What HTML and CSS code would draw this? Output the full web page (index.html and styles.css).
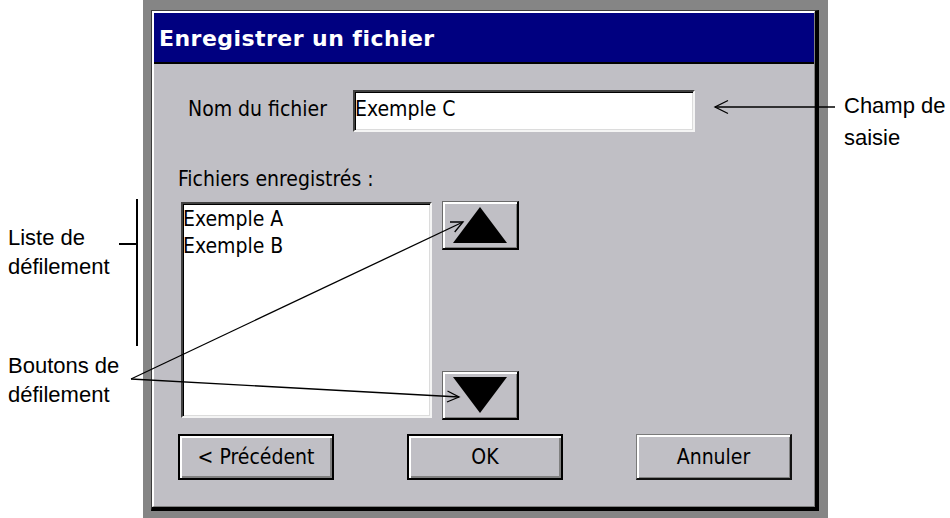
FILE: index.html
```html
<!DOCTYPE html>
<html lang="fr">
<head>
<meta charset="utf-8">
<title>Enregistrer un fichier</title>
<link rel="stylesheet" href="styles.css">
</head>
<body>
<div class="page">
  <aside class="notes-left">
    <p class="note note-list">Liste de<br>défilement</p>
    <p class="note note-scroll">Boutons de<br>défilement</p>
  </aside>
  <div class="frame">
    <div class="dialog">
      <div class="dialog-inner">
        <div class="titlebar">Enregistrer un fichier</div>
        <div class="dialog-body">
          <div class="name-row">
            <span class="name-label">Nom du fichier</span>
            <div class="field">Exemple C</div>
          </div>
          <div class="files-label">Fichiers enregistrés :</div>
          <div class="files-row">
            <ul class="listbox">
              <li>Exemple A</li>
              <li>Exemple B</li>
            </ul>
            <div class="scroll-col">
              <button class="scroll-btn" type="button" aria-label="Haut">
                <svg class="tri" width="54" height="36" viewBox="0 0 54 36"><polygon points="27,0 54,36 0,36"/></svg>
              </button>
              <button class="scroll-btn" type="button" aria-label="Bas">
                <svg class="tri" width="54" height="36" viewBox="0 0 54 36"><polygon points="0,0 54,0 27,36"/></svg>
              </button>
            </div>
          </div>
          <div class="actions">
            <button class="btn btn-default" type="button">&lt; Précédent</button>
            <button class="btn btn-default" type="button">OK</button>
            <button class="btn btn-plain" type="button">Annuler</button>
          </div>
        </div>
      </div>
    </div>
  </div>
  <aside class="notes-right">
    <p class="note note-field">Champ de<br>saisie</p>
  </aside>
</div>
<svg class="leaders" width="950" height="518" viewBox="0 0 950 518">
  <g fill="none" stroke="#000" stroke-width="1.3">
    <line x1="715" y1="107" x2="835" y2="107"/>
    <polyline points="728,100.5 715,107 728,113.5"/>
    <line x1="131" y1="379" x2="463" y2="222"/>
    <polyline points="450,222 463,222 454.7,232"/>
    <line x1="131" y1="379" x2="459" y2="397"/>
    <polyline points="447.5,391 459,397 447,402"/>
  </g>
  <g fill="none" stroke="#000" stroke-width="2">
    <line x1="137" y1="199" x2="137" y2="346"/>
    <line x1="119" y1="244" x2="137" y2="244"/>
  </g>
</svg>
</body>
</html>
```

FILE: styles.css
```css
* { box-sizing: border-box; }

html, body {
  margin: 0;
  padding: 0;
  background: #ffffff;
}

body {
  width: 950px;
  height: 518px;
  overflow: hidden;
  position: relative;
}

.page {
  display: flex;
  align-items: flex-start;
  height: 518px;
  overflow: hidden;
}

/* ---------- annotations ---------- */
.note {
  margin: 0;
  font-family: "Liberation Sans", Arial, sans-serif;
  font-size: 22px;
  color: #000;
}

.notes-left {
  flex: none;
  width: 143px;
  padding-left: 8px;
}

.note-list {
  margin-top: 224px;
  line-height: 28.5px;
}

.note-scroll {
  margin-top: 70px;
  line-height: 29px;
}

.notes-right {
  flex: 1;
  padding-left: 16px;
}

.note-field {
  margin-top: 90px;
  line-height: 32px;
}

.leaders {
  position: absolute;
  left: 0;
  top: 0;
  pointer-events: none;
}

/* ---------- dialog frame ---------- */
.frame {
  flex: none;
  width: 685px;
  background: #858585;
  padding: 10px 9px 7px 8px;
}

.dialog {
  border-left: 1px solid #3c3c3c;
  border-top: 1px solid #3c3c3c;
  border-right: 4px solid #000;
  border-bottom: 4px solid #000;
}

.dialog-inner {
  border-left: 2px solid #ffffff;
  border-top: 2px solid #ffffff;
  border-right: 1px solid #808080;
  border-bottom: 1px solid #808080;
  background: #c0bfc5;
}

.titlebar {
  height: 51px;
  padding: 3px 0 0 5px;
  background: #000080;
  border-bottom: 2px solid #000;
  color: #ffffff;
  font-family: "DejaVu Sans", "Liberation Sans", sans-serif;
  font-weight: bold;
  font-size: 22px;
  letter-spacing: 0.45px;
  line-height: 46px;
  white-space: nowrap;
}

.dialog-body {
  padding: 26px 0 26px 24px;
  font-family: "DejaVu Sans Condensed", "DejaVu Sans", sans-serif;
  font-stretch: condensed;
  font-size: 21px;
  line-height: 24px;
  color: #000;
}

/* name row */
.name-row {
  display: flex;
  align-items: baseline;
  gap: 23px;
  padding-left: 10px;
}

.name-label {
  flex: none;
  width: 142px;
  white-space: nowrap;
}

.field {
  width: 342px;
  height: 42px;
  padding: 5px 0 0 0;
  background: #ffffff;
  border-style: solid;
  border-width: 2px;
  border-color: #404040 #f4f4f4 #f4f4f4 #404040;
  box-shadow: inset 1px 1px #000, inset -1px -1px #dcdcdc;
  white-space: nowrap;
}

/* list */
.files-label {
  margin-top: 35px;
  white-space: nowrap;
}

.files-row {
  display: flex;
  align-items: flex-start;
  margin-top: 10px;
}

.listbox {
  list-style: none;
  margin: 1px 0 0 3px;
  padding: 2px 0 0 0;
  width: 251px;
  height: 216px;
  background: #ffffff;
  border-style: solid;
  border-width: 2px;
  border-color: #404040 #f4f4f4 #f4f4f4 #404040;
  box-shadow: inset 1px 1px #000, inset -1px -1px #dcdcdc;
  line-height: 27px;
}

.listbox li {
  white-space: nowrap;
}

.scroll-col {
  display: flex;
  flex-direction: column;
  justify-content: space-between;
  height: 219px;
  margin-left: 10px;
}

.scroll-btn {
  display: flex;
  align-items: center;
  justify-content: center;
  width: 77px;
  height: 49px;
  padding: 0;
  margin: 0;
  background: #c0bfc5;
  border-style: solid;
  border-width: 1px 2px 2px 1px;
  border-color: #6a6a6a #000 #000 #6a6a6a;
  box-shadow: inset 2px 2px #ffffff, inset -1px -1px #808080;
}

.tri {
  display: block;
  fill: #000;
}

/* action buttons */
.actions {
  display: flex;
  justify-content: space-between;
  width: 614px;
  margin-top: 14px;
}

.btn {
  width: 156px;
  height: 46px;
  padding: 0;
  margin: 0;
  background: #c0bfc5;
  font-family: inherit;
  font-stretch: condensed;
  font-size: 21px;
  line-height: 24px;
  color: #000;
  text-align: center;
}

.btn-default {
  border: 2px solid #000;
  box-shadow: inset 2px 2px #ffffff, inset -2px -2px #808080;
}

.btn-plain {
  border-style: solid;
  border-width: 1px 2px 2px 1px;
  border-color: #7a7a7a #111 #111 #7a7a7a;
  box-shadow: inset 2px 2px #ffffff, inset -1px -1px #808080;
}
```
